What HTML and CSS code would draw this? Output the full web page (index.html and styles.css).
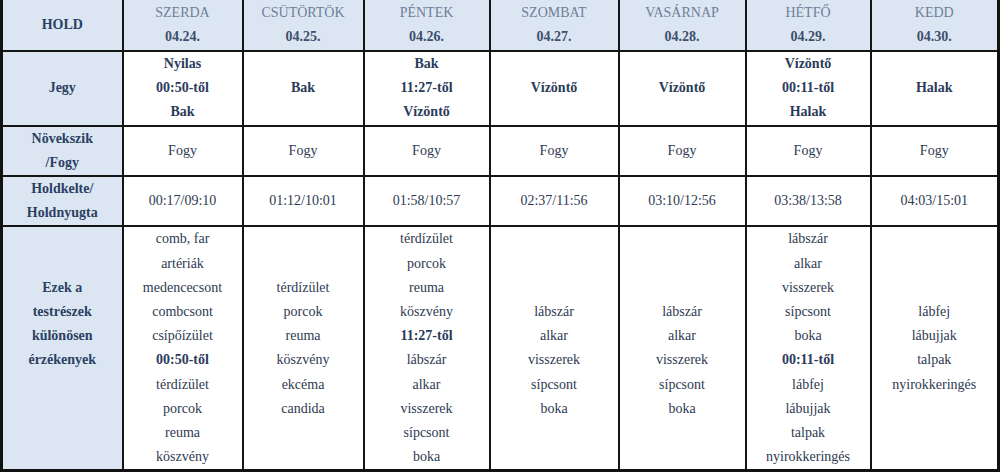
FILE: index.html
```html
<!DOCTYPE html>
<html lang="hu">
<head>
<meta charset="utf-8">
<title>Hold</title>
<link rel="stylesheet" href="styles.css">
</head>
<body>
<table class="moon">
  <colgroup>
    <col class="c0"><col class="c1"><col class="c2"><col class="c3"><col class="c4"><col class="c5"><col class="c6"><col class="c7">
  </colgroup>
  <tr class="r-head">
    <th class="lab"><b>HOLD</b></th>
    <th class="day"><div class="dn">SZERDA</div><div class="dd">04.24.</div></th>
    <th class="day"><div class="dn">CSÜTÖRTÖK</div><div class="dd">04.25.</div></th>
    <th class="day"><div class="dn">PÉNTEK</div><div class="dd">04.26.</div></th>
    <th class="day"><div class="dn">SZOMBAT</div><div class="dd">04.27.</div></th>
    <th class="day"><div class="dn">VASÁRNAP</div><div class="dd">04.28.</div></th>
    <th class="day"><div class="dn">HÉTFŐ</div><div class="dd">04.29.</div></th>
    <th class="day"><div class="dn">KEDD</div><div class="dd">04.30.</div></th>
  </tr>
  <tr class="r-sign">
    <td class="lab">Jegy</td>
    <td class="b"><div>Nyilas</div><div>00:50-től</div><div>Bak</div></td>
    <td class="b">Bak</td>
    <td class="b"><div>Bak</div><div>11:27-től</div><div>Vízöntő</div></td>
    <td class="b">Vízöntő</td>
    <td class="b">Vízöntő</td>
    <td class="b"><div>Vízöntő</div><div>00:11-től</div><div>Halak</div></td>
    <td class="b">Halak</td>
  </tr>
  <tr class="r-phase">
    <td class="lab"><div>Növekszik</div><div>/Fogy</div></td>
    <td>Fogy</td><td>Fogy</td><td>Fogy</td><td>Fogy</td><td>Fogy</td><td>Fogy</td><td>Fogy</td>
  </tr>
  <tr class="r-rise">
    <td class="lab"><div>Holdkelte/</div><div>Holdnyugta</div></td>
    <td>00:17/09:10</td><td>01:12/10:01</td><td>01:58/10:57</td><td>02:37/11:56</td><td>03:10/12:56</td><td>03:38/13:58</td><td>04:03/15:01</td>
  </tr>
  <tr class="r-body">
    <td class="lab"><div>Ezek a</div><div>testrészek</div><div>különösen</div><div>érzékenyek</div><div>&nbsp;</div><div>&nbsp;</div></td>
    <td><div>comb, far</div><div>artériák</div><div>medencecsont</div><div>combcsont</div><div>csípőízület</div><div class="b">00:50-től</div><div>térdízület</div><div>porcok</div><div>reuma</div><div>köszvény</div></td>
    <td><div>térdízület</div><div>porcok</div><div>reuma</div><div>köszvény</div><div>ekcéma</div><div>candida</div></td>
    <td><div>térdízület</div><div>porcok</div><div>reuma</div><div>köszvény</div><div class="b">11:27-től</div><div>lábszár</div><div>alkar</div><div>visszerek</div><div>sípcsont</div><div>boka</div></td>
    <td><div>&nbsp;</div><div>lábszár</div><div>alkar</div><div>visszerek</div><div>sípcsont</div><div>boka</div></td>
    <td><div>&nbsp;</div><div>lábszár</div><div>alkar</div><div>visszerek</div><div>sípcsont</div><div>boka</div></td>
    <td><div>lábszár</div><div>alkar</div><div>visszerek</div><div>sípcsont</div><div>boka</div><div class="b">00:11-től</div><div>lábfej</div><div>lábujjak</div><div>talpak</div><div>nyirokkeringés</div></td>
    <td><div>lábfej</div><div>lábujjak</div><div>talpak</div><div>nyirokkeringés</div></td>
  </tr>
</table>
</body>
</html>
```
FILE: styles.css
```css
html, body {
  margin: 0;
  padding: 0;
  background: #ffffff;
}
body {
  font-family: "Liberation Serif", "Times New Roman", "DejaVu Serif", serif;
  font-size: 14px;
  color: #2e3a52;
}
.moon {
  border-collapse: collapse;
  table-layout: fixed;
  width: 998px;
  border-left: 3px solid #111;
  border-right: 3px solid #111;
  border-bottom: 3px solid #111;
}
.c0 { width: 121px; }
.c1 { width: 120px; }
.c2 { width: 121px; }
.c3 { width: 126px; }
.c4 { width: 129px; }
.c5 { width: 127px; }
.c6 { width: 125px; }
.c7 { width: 128px; }
.moon th, .moon td {
  border: 2px solid #151515;
  padding: 0;
  text-align: center;
  vertical-align: middle;
  line-height: 24.2px;
  font-weight: normal;
}
.moon tr:first-child th { border-top: none; }
.r-head { height: 51px; }
.r-sign { height: 72px; }
.r-phase { height: 49px; }
.r-rise { height: 49px; }
.r-body { height: 240px; }
.lab {
  background: #dce6f2;
  color: #2b3f63;
}
.moon th.lab, .moon td.lab { font-weight: bold; }
.day { background: #dce6f2; }
.dn {
  color: #6e7f99;
  font-weight: normal;
}
.dd {
  color: #3d4f6d;
  font-weight: bold;
}
.moon td.b, .moon .b {
  font-weight: bold;
  color: #2b3b5a;
}
```
